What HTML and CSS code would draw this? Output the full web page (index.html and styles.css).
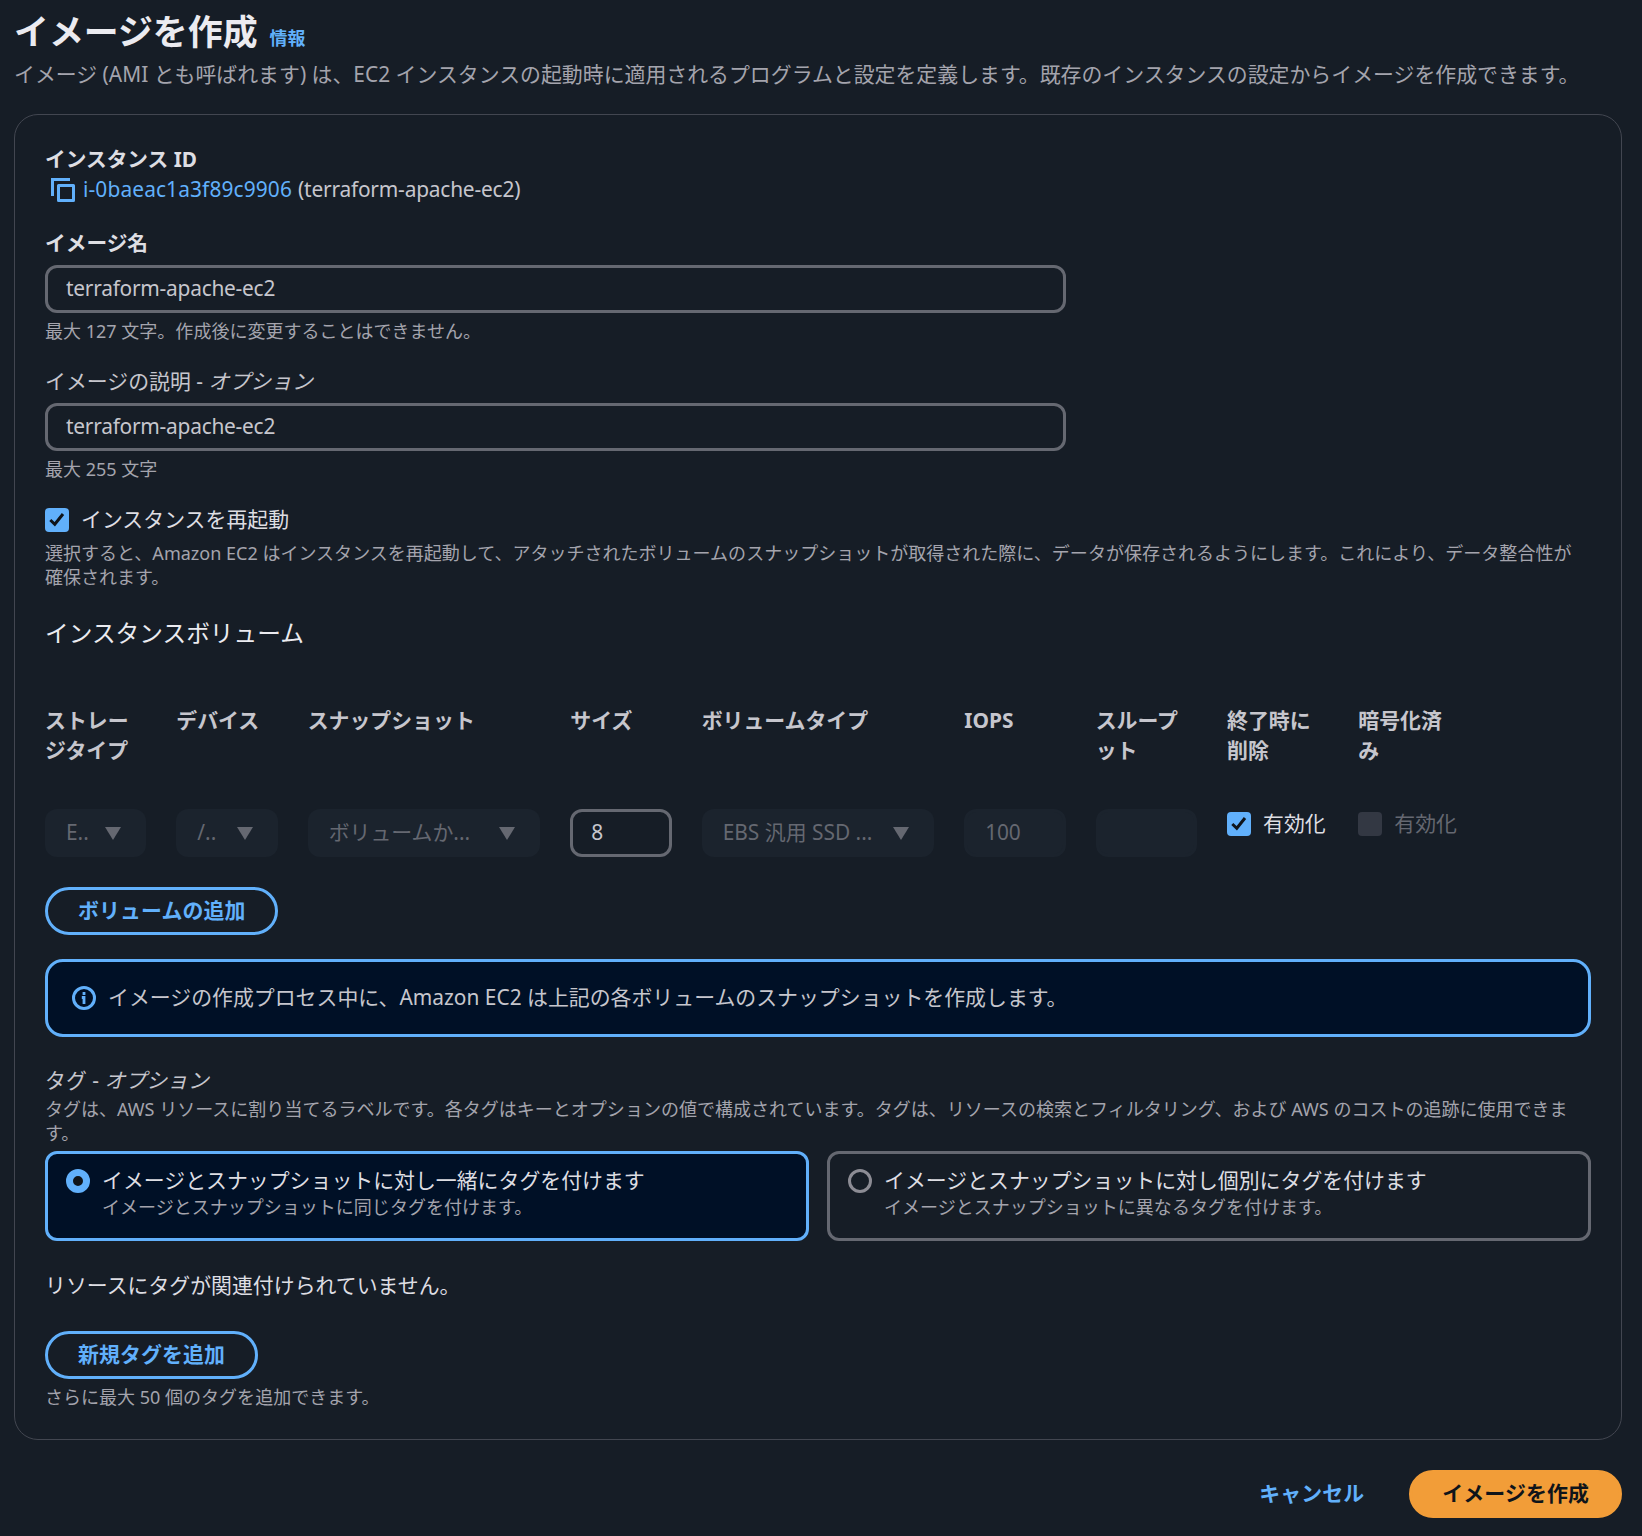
FILE: index.html
```html
<!DOCTYPE html>
<html lang="ja">
<head>
    <meta charset="UTF-8">
    <title>イメージを作成</title>
    <link rel="stylesheet" href="styles.css">
</head>
<body>
<div class="page">
    <div class="header">
        <h1>イメージを作成</h1>
        <a class="info">情報</a>
    </div>
    <p class="lead">イメージ (AMI とも呼ばれます) は、EC2 インスタンスの起動時に適用されるプログラムと設定を定義します。既存のインスタンスの設定からイメージを作成できます。</p>

    <div class="container">
        <div class="label bold">インスタンス ID</div>
        <div class="instance">
            <svg class="copy" width="24" height="24" viewBox="0 0 24 24" fill="none" stroke="currentColor" stroke-width="3">
                <path d="M1.5 18V1.5H19"/>
                <path d="M7.5 7.5h15v15h-15z" stroke-linejoin="round"/>
            </svg>
            <a class="link">i-0baeac1a3f89c9906</a>
            <span class="name">(terraform-apache-ec2)</span>
        </div>

        <div class="field first">
            <div class="label bold">イメージ名</div>
            <input class="input" type="text" value="terraform-apache-ec2">
            <div class="hint">最大 127 文字。作成後に変更することはできません。</div>
        </div>
        <div class="field">
            <div class="label">イメージの説明 - <i>オプション</i></div>
            <input class="input" type="text" value="terraform-apache-ec2">
            <div class="hint">最大 255 文字</div>
        </div>

        <div class="check reboot">
            <span class="box on"><svg width="24" height="24" viewBox="0 0 24 24"><path d="M5.3 12l4.5 4.3L18 6"/></svg></span>
            <span class="check_text">インスタンスを再起動</span>
        </div>
        <div class="hint">選択すると、Amazon EC2 はインスタンスを再起動して、アタッチされたボリュームのスナップショットが取得された際に、データが保存されるようにします。これにより、データ整合性が<br>確保されます。</div>

        <h2>インスタンスボリューム</h2>
        <div class="grid head">
            <div>ストレー<br>ジタイプ</div>
            <div>デバイス</div>
            <div class="wide">スナップショット</div>
            <div>サイズ</div>
            <div class="wide">ボリュームタイプ</div>
            <div>IOPS</div>
            <div>スループ<br>ット</div>
            <div>終了時に<br>削除</div>
            <div>暗号化済<br>み</div>
        </div>
        <div class="grid volume">
            <div class="select"><span>E..</span><i class="arrow"></i></div>
            <div class="select"><span>/..</span><i class="arrow"></i></div>
            <div class="select wide"><span>ボリュームか...</span><i class="arrow"></i></div>
            <input class="input small" type="text" value="8">
            <div class="select wide"><span>EBS 汎用 SSD ...</span><i class="arrow"></i></div>
            <input class="input small" type="text" value="100" disabled>
            <input class="input small" type="text" disabled>
            <div class="check">
                <span class="box on"><svg width="24" height="24" viewBox="0 0 24 24"><path d="M5.3 12l4.5 4.3L18 6"/></svg></span>
                <span class="check_text">有効化</span>
            </div>
            <div class="check off">
                <span class="box"></span>
                <span class="check_text">有効化</span>
            </div>
        </div>
        <button class="btn add_volume">ボリュームの追加</button>

        <div class="alert">
            <svg width="24" height="24" viewBox="0 0 24 24" fill="none" stroke="currentColor" stroke-width="3">
                <circle cx="12" cy="12" r="10.5"/>
                <path d="M9.8 11.5H12V18M12 6v3" stroke-width="2.8"/>
            </svg>
            <span>イメージの作成プロセス中に、Amazon EC2 は上記の各ボリュームのスナップショットを作成します。</span>
        </div>

        <div class="label tag_label">タグ - <i>オプション</i></div>
        <div class="hint tag_hint">タグは、AWS リソースに割り当てるラベルです。各タグはキーとオプションの値で構成されています。タグは、リソースの検索とフィルタリング、および AWS のコストの追跡に使用できま<br>す。</div>
        <div class="tiles">
            <div class="tile active">
                <span class="radio"></span>
                <div>
                    <div class="tile_title">イメージとスナップショットに対し一緒にタグを付けます</div>
                    <div class="tile_text">イメージとスナップショットに同じタグを付けます。</div>
                </div>
            </div>
            <div class="tile">
                <span class="radio"></span>
                <div>
                    <div class="tile_title">イメージとスナップショットに対し個別にタグを付けます</div>
                    <div class="tile_text">イメージとスナップショットに異なるタグを付けます。</div>
                </div>
            </div>
        </div>
        <div class="empty">リソースにタグが関連付けられていません。</div>
        <button class="btn">新規タグを追加</button>
        <div class="hint">さらに最大 50 個のタグを追加できます。</div>
    </div>

    <div class="footer">
        <button class="btn cancel">キャンセル</button>
        <button class="btn primary">イメージを作成</button>
    </div>
</div>
</body>
</html>
```

FILE: styles.css
```css
* {
	box-sizing: border-box;
}
body {
	margin: 0;
	background-color: #161d26;
	color: #c6c6cd;
	font-family: "Noto Sans", "Noto Sans CJK JP", sans-serif;
	font-size: 20.9px;
	line-height: 30px;
}
.page {
	padding: 9px 20px 18px 14px;
	height: 1536px;
	overflow: hidden;
	white-space: nowrap;
}
.header {
	display: flex;
	align-items: baseline;
	gap: 12px;
}
h1 {
	margin: 0;
	font-size: 34.9px;
	line-height: 45px;
	color: #ebebf0;
}
.info {
	font-size: 17.9px;
	font-weight: bold;
	color: #61b0fb;
}
.lead {
	margin: 5px 0 25px;
	color: #a4a4ad;
}
.container {
	height: 1326px;
	border: 1px solid #424650;
	border-radius: 24px;
	padding: 29px 30px;
}
.label.bold {
	font-weight: bold;
	font-size: 20.7px;
	color: #dedee3;
}
.instance {
	display: flex;
	align-items: center;
	padding-left: 6px;
}
.copy {
	color: #61b0fb;
	margin: 2px 8px 0 0;
}
.link {
	color: #61b0fb;
	letter-spacing: 0.12px;
	margin-right: 6px;
}
.name {
	letter-spacing: -0.2px;
}
.field {
	margin-top: 23px;
}
.field.first {
	margin-top: 24px;
}
.input {
	display: block;
	width: 1021px;
	height: 48px;
	margin-top: 7px;
	padding: 0 18px 2px;
	border: 3px solid #656871;
	border-radius: 12px;
	background-color: #161d26;
	color: #c6c6cd;
	font: inherit;
	letter-spacing: -0.25px;
}
.hint {
	margin-top: 6px;
	font-size: 18.03px;
	line-height: 24px;
	color: #a4a4ad;
}
.check {
	display: flex;
	align-items: center;
	gap: 12px;
	height: 30px;
	color: #dedee3;
}
.check_text {
	padding-bottom: 2px;
}
.reboot {
	margin-top: 24px;
}
.box {
	flex: none;
	width: 24px;
	height: 24px;
	border-radius: 4px;
	background-color: #333843;
}
.box.on {
	background-color: #61b0fb;
}
.box svg {
	display: block;
	fill: none;
	stroke: #0f141a;
	stroke-width: 3;
}
.off {
	color: #656871;
}
h2 {
	margin: 29px 0 0;
	font-size: 23.7px;
	font-weight: normal;
	line-height: 30px;
	color: #ebebf0;
}
.grid {
	display: grid;
	grid-template-columns: repeat(12, 1fr);
	column-gap: 30px;
}
.wide {
	grid-column: span 2;
}
.head {
	margin-top: 57px;
	font-weight: bold;
}
.volume {
	margin-top: 44px;
}
.small {
	width: 100%;
	margin: 0;
}
.input:disabled,
.select {
	border-color: #1b232d;
	background-color: #1b232d;
	color: #656871;
}
.select {
	display: flex;
	justify-content: space-between;
	align-items: center;
	height: 48px;
	padding: 0 25px 0 21px;
	border-radius: 12px;
}
.select span {
	padding-bottom: 2px;
}
.arrow {
	border: 8px solid transparent;
	border-top: 13px solid #656871;
	border-bottom: 0;
}
.btn {
	display: block;
	height: 48px;
	margin: 0;
	padding: 0 30px 2px;
	border: 3px solid #61b0fb;
	border-radius: 24px;
	background: none;
	color: #61b0fb;
	font: inherit;
	font-weight: bold;
	letter-spacing: 0.12px;
}
.add_volume {
	margin-top: 30px;
}
.alert {
	display: flex;
	align-items: center;
	gap: 12px;
	height: 78px;
	margin-top: 24px;
	padding: 0 24px;
	border: 3px solid #61b0fb;
	border-radius: 18px;
	background-color: #001026;
}
.alert span {
	padding-bottom: 2px;
}
.alert svg {
	color: #61b0fb;
}
.tag_label {
	margin-top: 28px;
}
.tag_hint {
	margin-top: 2px;
}
.tiles {
	display: grid;
	grid-template-columns: 1fr 1fr;
	gap: 18px;
	margin-top: 6px;
}
.tile {
	display: flex;
	gap: 12px;
	height: 90px;
	padding: 11px 18px;
	border: 3px solid #656871;
	border-radius: 12px;
}
.tile.active {
	border-color: #61b0fb;
	background-color: #001026;
}
.radio {
	flex: none;
	width: 24px;
	height: 24px;
	margin-top: 4px;
	border: 3px solid #8c8c94;
	border-radius: 50%;
}
.active .radio {
	border: 7px solid #61b0fb;
	background-color: #0f141a;
}
.tile_title {
	color: #dedee3;
}
.tile_text {
	font-size: 18.03px;
	line-height: 24px;
	color: #a4a4ad;
}
.empty {
	margin: 29px 0 31px;
	color: #dedee3;
}
.footer {
	display: flex;
	justify-content: flex-end;
	gap: 12px;
	margin-top: 30px;
}
.cancel {
	border-color: transparent;
}
.primary {
	border-color: #f29d38;
	background-color: #f29d38;
	color: #0f141a;
}
```
